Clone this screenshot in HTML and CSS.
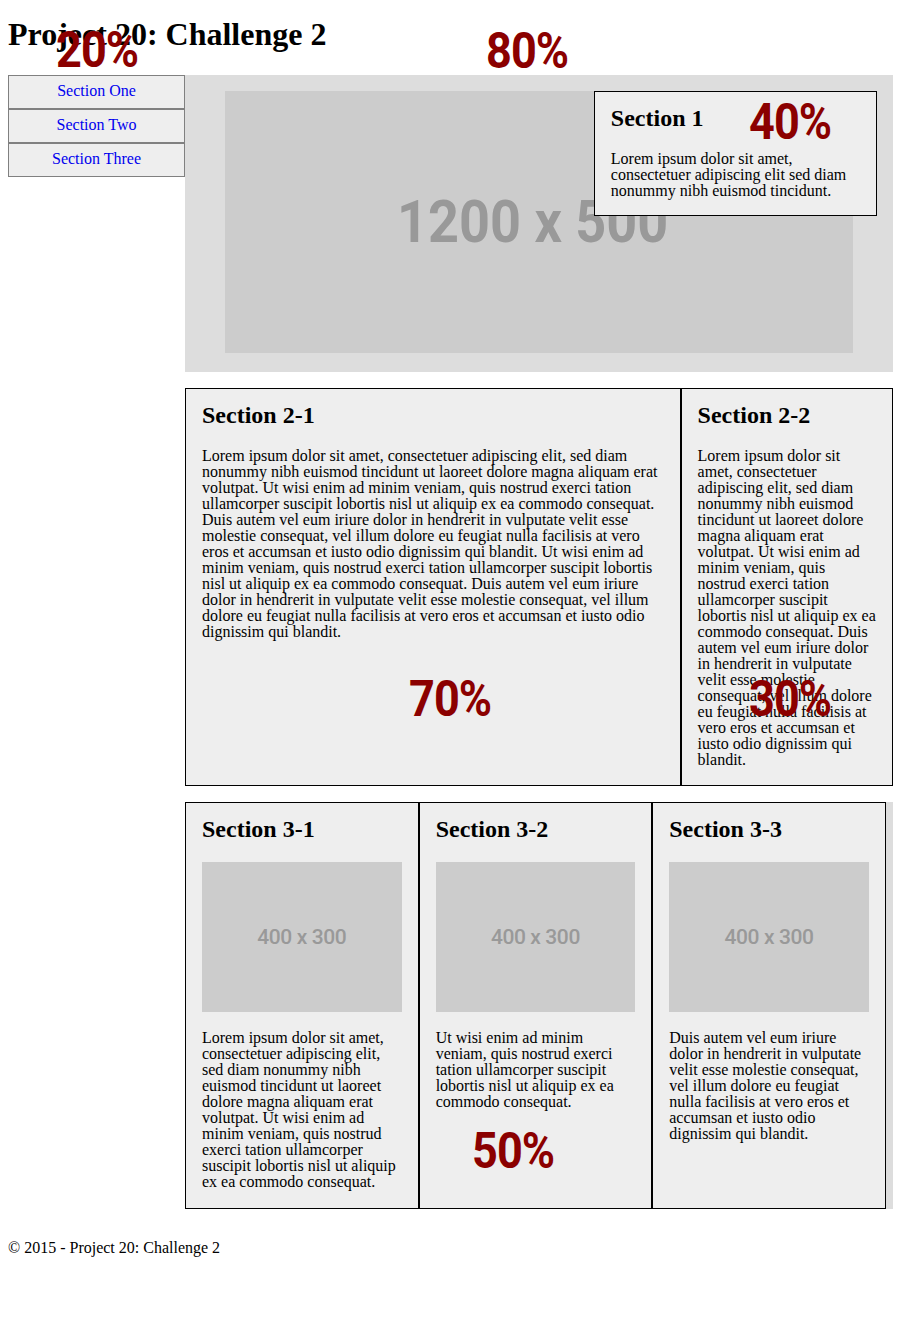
FILE: index.html
```html
<!DOCTYPE html>
<html lang="en">
<head>
<meta charset="utf-8">
<title>Project 20: Challenge 2</title>
<link rel="stylesheet" href="styles.css">
</head>
<body>
<header class="page-header">
  <h1 class="title">Project 20: Challenge 2</h1>
</header>
<div class="layout">
  <nav class="side-nav">
    <span class="pct pct-nav">20%</span>
    <a class="nav-link" href="#one">Section One</a>
    <a class="nav-link" href="#two">Section Two</a>
    <a class="nav-link" href="#three">Section Three</a>
  </nav>
  <main class="main">
    <span class="pct pct-main">80%</span>
    <section class="hero" id="one">
      <div class="ph ph-hero"><span class="ph-text ph-text-big">1200 x 500</span></div>
      <div class="box box-overlay">
        <span class="pct pct-s1">40%</span>
        <h2 class="box-title">Section 1</h2>
        <p class="box-text">Lorem ipsum dolor sit amet, consectetuer adipiscing elit sed diam nonummy nibh euismod tincidunt.</p>
      </div>
    </section>
    <section class="row row-two" id="two">
      <div class="box box-70">
        <span class="pct pct-s21">70%</span>
        <h2 class="box-title">Section 2-1</h2>
        <p class="box-text">Lorem ipsum dolor sit amet, consectetuer adipiscing elit, sed diam nonummy nibh euismod tincidunt ut laoreet dolore magna aliquam erat volutpat. Ut wisi enim ad minim veniam, quis nostrud exerci tation ullamcorper suscipit lobortis nisl ut aliquip ex ea commodo consequat. Duis autem vel eum iriure dolor in hendrerit in vulputate velit esse molestie consequat, vel illum dolore eu feugiat nulla facilisis at vero eros et accumsan et iusto odio dignissim qui blandit. Ut wisi enim ad minim veniam, quis nostrud exerci tation ullamcorper suscipit lobortis nisl ut aliquip ex ea commodo consequat. Duis autem vel eum iriure dolor in hendrerit in vulputate velit esse molestie consequat, vel illum dolore eu feugiat nulla facilisis at vero eros et accumsan et iusto odio dignissim qui blandit.</p>
      </div>
      <div class="box box-30">
        <span class="pct pct-s22">30%</span>
        <h2 class="box-title">Section 2-2</h2>
        <p class="box-text">Lorem ipsum dolor sit amet, consectetuer adipiscing elit, sed diam nonummy nibh euismod tincidunt ut laoreet dolore magna aliquam erat volutpat. Ut wisi enim ad minim veniam, quis nostrud exerci tation ullamcorper suscipit lobortis nisl ut aliquip ex ea commodo consequat. Duis autem vel eum iriure dolor in hendrerit in vulputate velit esse molestie consequat, vel illum dolore eu feugiat nulla facilisis at vero eros et accumsan et iusto odio dignissim qui blandit.</p>
      </div>
    </section>
    <section class="row row-three" id="three">
      <div class="box box-33">
        <h2 class="box-title">Section 3-1</h2>
        <div class="ph ph-small"><span class="ph-text ph-text-small">400 x 300</span></div>
        <p class="box-text">Lorem ipsum dolor sit amet, consectetuer adipiscing elit, sed diam nonummy nibh euismod tincidunt ut laoreet dolore magna aliquam erat volutpat. Ut wisi enim ad minim veniam, quis nostrud exerci tation ullamcorper suscipit lobortis nisl ut aliquip ex ea commodo consequat.</p>
      </div>
      <div class="box box-33">
        <span class="pct pct-s32">50%</span>
        <h2 class="box-title">Section 3-2</h2>
        <div class="ph ph-small"><span class="ph-text ph-text-small">400 x 300</span></div>
        <p class="box-text">Ut wisi enim ad minim veniam, quis nostrud exerci tation ullamcorper suscipit lobortis nisl ut aliquip ex ea commodo consequat.</p>
      </div>
      <div class="box box-33">
        <h2 class="box-title">Section 3-3</h2>
        <div class="ph ph-small"><span class="ph-text ph-text-small">400 x 300</span></div>
        <p class="box-text">Duis autem vel eum iriure dolor in hendrerit in vulputate velit esse molestie consequat, vel illum dolore eu feugiat nulla facilisis at vero eros et accumsan et iusto odio dignissim qui blandit.</p>
      </div>
    </section>
  </main>
</div>
<footer class="page-footer">
  <p class="footer-text">&copy; 2015 - Project 20: Challenge 2</p>
</footer>
</body>
</html>
```

FILE: styles.css
```css
html, body {
  background: #fff;
}
body {
  margin: 0;
  padding: 8px;
  font-family: "Liberation Serif", "Times New Roman", serif;
  font-size: 16px;
  color: #000;
}
.page-header {
  display: flow-root;
}
.title {
  margin: 8px 0 22px;
  font-size: 32px;
  font-weight: bold;
  line-height: normal;
}
.layout {
  display: flex;
  align-items: flex-start;
}
.side-nav {
  position: relative;
  width: 20%;
  flex: 0 0 20%;
  display: flex;
  flex-direction: column;
}
.nav-link {
  display: block;
  background: #eee;
  border: 1px solid #808080;
  color: #0000ee;
  text-decoration: none;
  text-align: center;
  line-height: 16px;
  padding: 7px 0 9px;
}
.main {
  position: relative;
  width: 80%;
  flex: 0 0 80%;
}
.pct {
  position: absolute;
  z-index: 5;
  font-family: Roboto, "Liberation Sans", sans-serif;
  font-weight: 700;
  font-size: 50px;
  line-height: 50px;
  letter-spacing: -1px;
  color: #8b0000;
  white-space: nowrap;
  transform: scaleX(0.9);
  transform-origin: 0 0;
}
.pct-nav { left: 48px; top: -50px; }
.pct-main { left: 301px; top: -49px; }
.pct-s1 { left: 154px; top: 5px; }
.pct-s21 { left: 223px; top: 285px; }
.pct-s22 { left: 67px; top: 285px; }
.pct-s32 { left: 52px; top: 323px; }

.hero {
  position: relative;
  background: #ddd;
  padding: 16px 40px 19px;
}
.ph {
  background: #ccc;
  display: flex;
  align-items: center;
  justify-content: center;
  overflow: hidden;
}
.ph-hero {
  aspect-ratio: 1200 / 500;
}
.ph-small {
  aspect-ratio: 400 / 300;
  margin-bottom: 18.6px;
}
.ph-text {
  font-family: Roboto, "Liberation Sans", sans-serif;
  color: #999;
  white-space: nowrap;
}
.ph-text-big {
  font-size: 60px;
  font-weight: 700;
  transform: scaleX(0.9);
  margin-right: 12px;
}
.ph-text-small {
  font-size: 21px;
  font-weight: 500;
  letter-spacing: -0.4px;
}

.box {
  position: relative;
  box-sizing: border-box;
  background: #eee;
  border: 1px solid #000;
  padding: 13px 16px 17.5px;
}
.box-overlay {
  position: absolute;
  top: 16px;
  right: 16px;
  width: 40%;
  padding-bottom: 16px;
}
.box-title {
  margin: 0 0 18.9px;
  font-size: 24px;
  font-weight: bold;
  line-height: normal;
}
.box-text {
  margin: 0;
  line-height: 16px;
}
.row {
  display: flex;
  align-items: stretch;
  background: #ddd;
  margin-top: 16px;
}
.box-70 { width: 70%; }
.box-30 { width: 30%; }
.box-33 { width: 33%; }

.page-footer {
  margin-top: 31px;
}
.footer-text {
  margin: 0;
  line-height: 16px;
}
```
